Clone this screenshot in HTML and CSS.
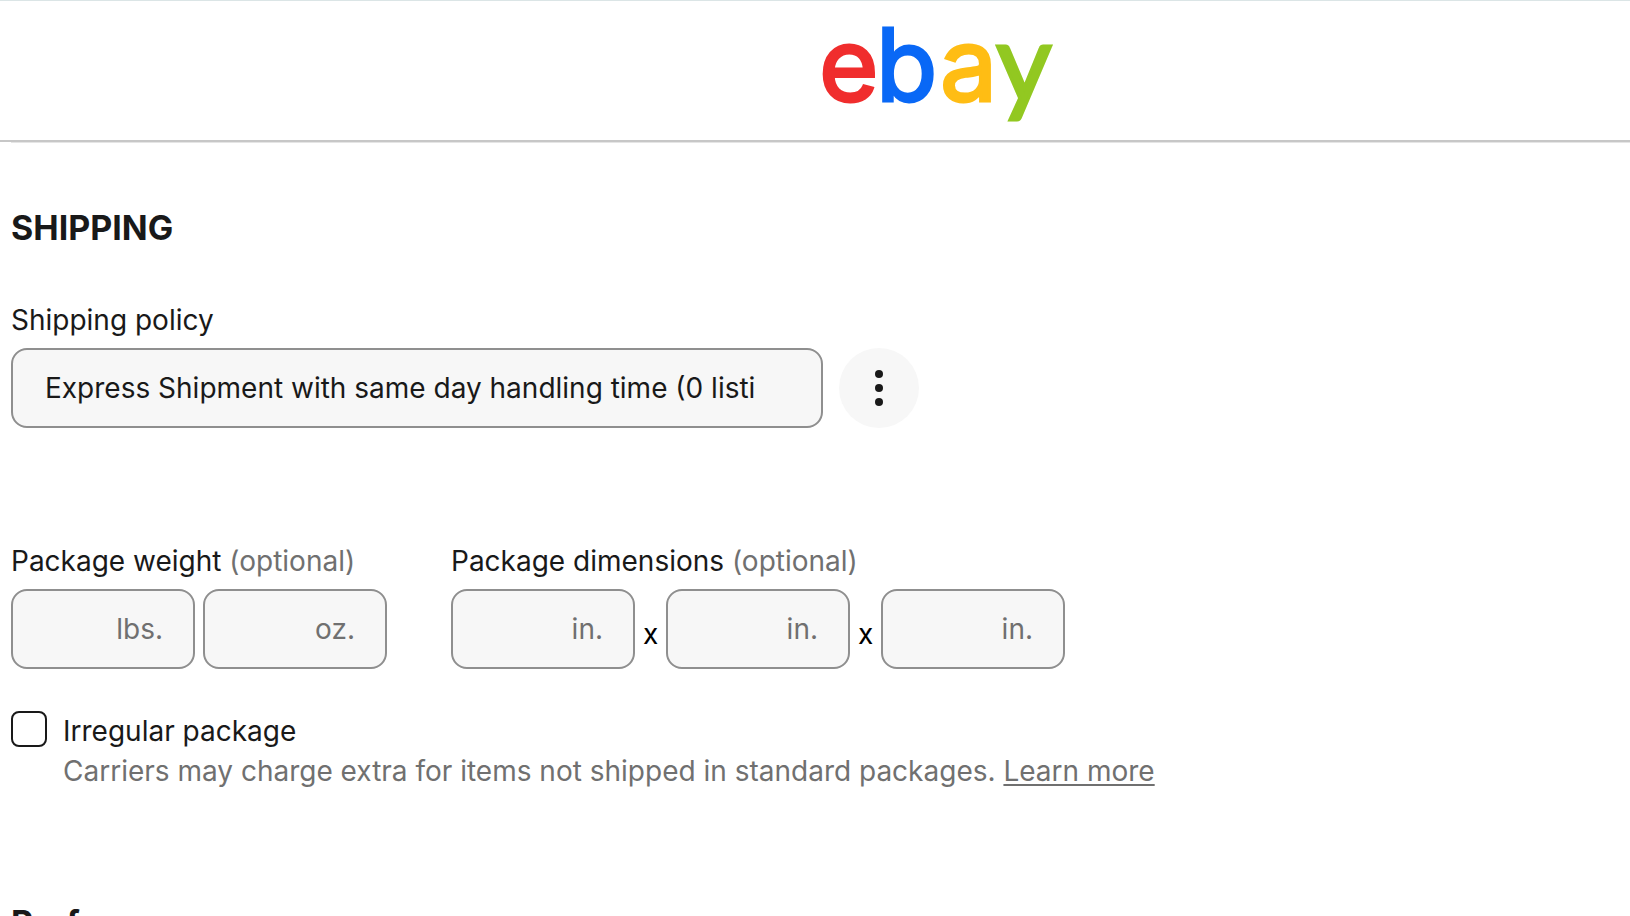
FILE: index.html
```html
<!DOCTYPE html>
<html lang="en">
<head>
<meta charset="utf-8">
<title>Create listing | eBay</title>
<link rel="stylesheet" href="styles.css">
</head>
<body>
<header class="header">
  <svg class="logo" width="256" height="139" viewBox="-10 0 256 139" role="img" aria-label="ebay">
    <text class="logo-e" x="-4" y="100">e</text>
    <text class="logo-a" x="117" y="100">a</text>
    <text class="logo-b" x="53" y="100">b</text>
    <text class="logo-y" x="173" y="100">y</text>
  </svg>
</header>
<main class="content">
  <section class="section">
    <h2 class="title">SHIPPING</h2>
    <label class="label" for="policy">Shipping policy</label>
    <div class="policy-row">
      <select class="select" id="policy">
        <option>Express Shipment with same day handling time (0 listings)</option>
      </select>
      <button class="more" type="button" aria-label="More options">
        <svg width="8" height="36" viewBox="0 0 8 36" aria-hidden="true">
          <circle cx="4" cy="4" r="4"/><circle cx="4" cy="18" r="4"/><circle cx="4" cy="32" r="4"/>
        </svg>
      </button>
    </div>
    <div class="package">
      <div>
        <label class="label" for="lbs">Package weight <span class="muted">(optional)</span></label>
        <div class="fields">
          <label class="box"><input id="lbs" type="text"><span>lbs.</span></label>
          <label class="box"><input type="text"><span>oz.</span></label>
        </div>
      </div>
      <div>
        <label class="label" for="len">Package dimensions <span class="muted">(optional)</span></label>
        <div class="fields">
          <label class="box"><input id="len" type="text"><span>in.</span></label>
          <span class="times">x</span>
          <label class="box"><input type="text"><span>in.</span></label>
          <span class="times">x</span>
          <label class="box"><input type="text"><span>in.</span></label>
        </div>
      </div>
    </div>
    <div class="irregular">
      <input class="check" id="irregular" type="checkbox">
      <div class="irregular-text">
        <label for="irregular">Irregular package</label>
        <p class="note">Carriers may charge extra for items not shipped in standard packages. <a class="link" href="#">Learn more</a></p>
      </div>
    </div>
  </section>
  <section class="section next">
    <h2 class="title">Preferences</h2>
  </section>
</main>
</body>
</html>
```

FILE: styles.css
```css
* { box-sizing: border-box; }
html { overflow: hidden; height: 100%; }
body {
  margin: 0;
  height: 100%;
  overflow: hidden;
  background: #fff;
  color: #191919;
  font: 28px/40px Inter, "Liberation Sans", sans-serif;
}
.header {
  display: flex;
  justify-content: center;
  padding-left: 252px;
  border-top: 1px solid #dbe5e6;
  border-bottom: 2px solid #c7c7c7;
}
.logo { display: block; overflow: visible; font-family: Inter, sans-serif; font-weight: 400; font-size: 102px; stroke-width: 3px; }
.logo-e { fill: #f02d2d; stroke: #f02d2d; }
.logo-b { fill: #0968f6; stroke: #0968f6; font-size: 100px; }
.logo-a { fill: #ffbd14; stroke: #ffbd14; }
.logo-y { fill: #92c821; stroke: #92c821; font-family: Lato, sans-serif; font-weight: 400; font-size: 108px; }
.content { padding-left: 11px; }
.section { border-top: 1px solid #e5e5e5; padding-top: 65px; }
.title { margin: 0 0 52px; font-size: 34px; line-height: 40px; font-weight: 700; }
.label { display: block; margin-bottom: 8px; }
.muted { color: #707070; }
.policy-row { display: flex; gap: 16px; }
.select {
  appearance: none;
  flex: 0 1 812px;
  min-width: 0;
  height: 80px;
  padding: 0 64px 0 32px;
  border: 2px solid #8f8f8f;
  border-radius: 16px;
  background: #f7f7f7;
  color: #191919;
  font: inherit;
}
.more {
  display: grid;
  place-items: center;
  flex: none;
  width: 80px;
  height: 80px;
  padding: 0;
  border: 0;
  border-radius: 50%;
  background: #f7f7f7;
  fill: #191919;
}
.package { display: flex; gap: 64px; margin-top: 113px; }
.fields { display: flex; align-items: center; gap: 8px; }
.box {
  display: flex;
  align-items: center;
  width: 184px;
  height: 80px;
  padding: 0 30px;
  border: 2px solid #8f8f8f;
  border-radius: 16px;
  background: #f7f7f7;
  color: #707070;
}
.box input { flex: 1; min-width: 0; width: 0; padding: 0; border: 0; outline: 0; background: none; font: inherit; }
.times { width: 15px; padding-top: 10px; color: #000; }
.irregular { display: flex; gap: 16px; margin-top: 42px; }
.check {
  appearance: none;
  flex: none;
  width: 36px;
  height: 36px;
  margin: 0;
  border: 2px solid #191919;
  border-radius: 8px;
  background: #fff;
}
.note { margin: 0; color: #707070; }
.link { color: inherit; text-decoration-thickness: 2px; text-underline-offset: 3px; }
.next { margin-top: 112px; border: 0; padding: 0; }
```
